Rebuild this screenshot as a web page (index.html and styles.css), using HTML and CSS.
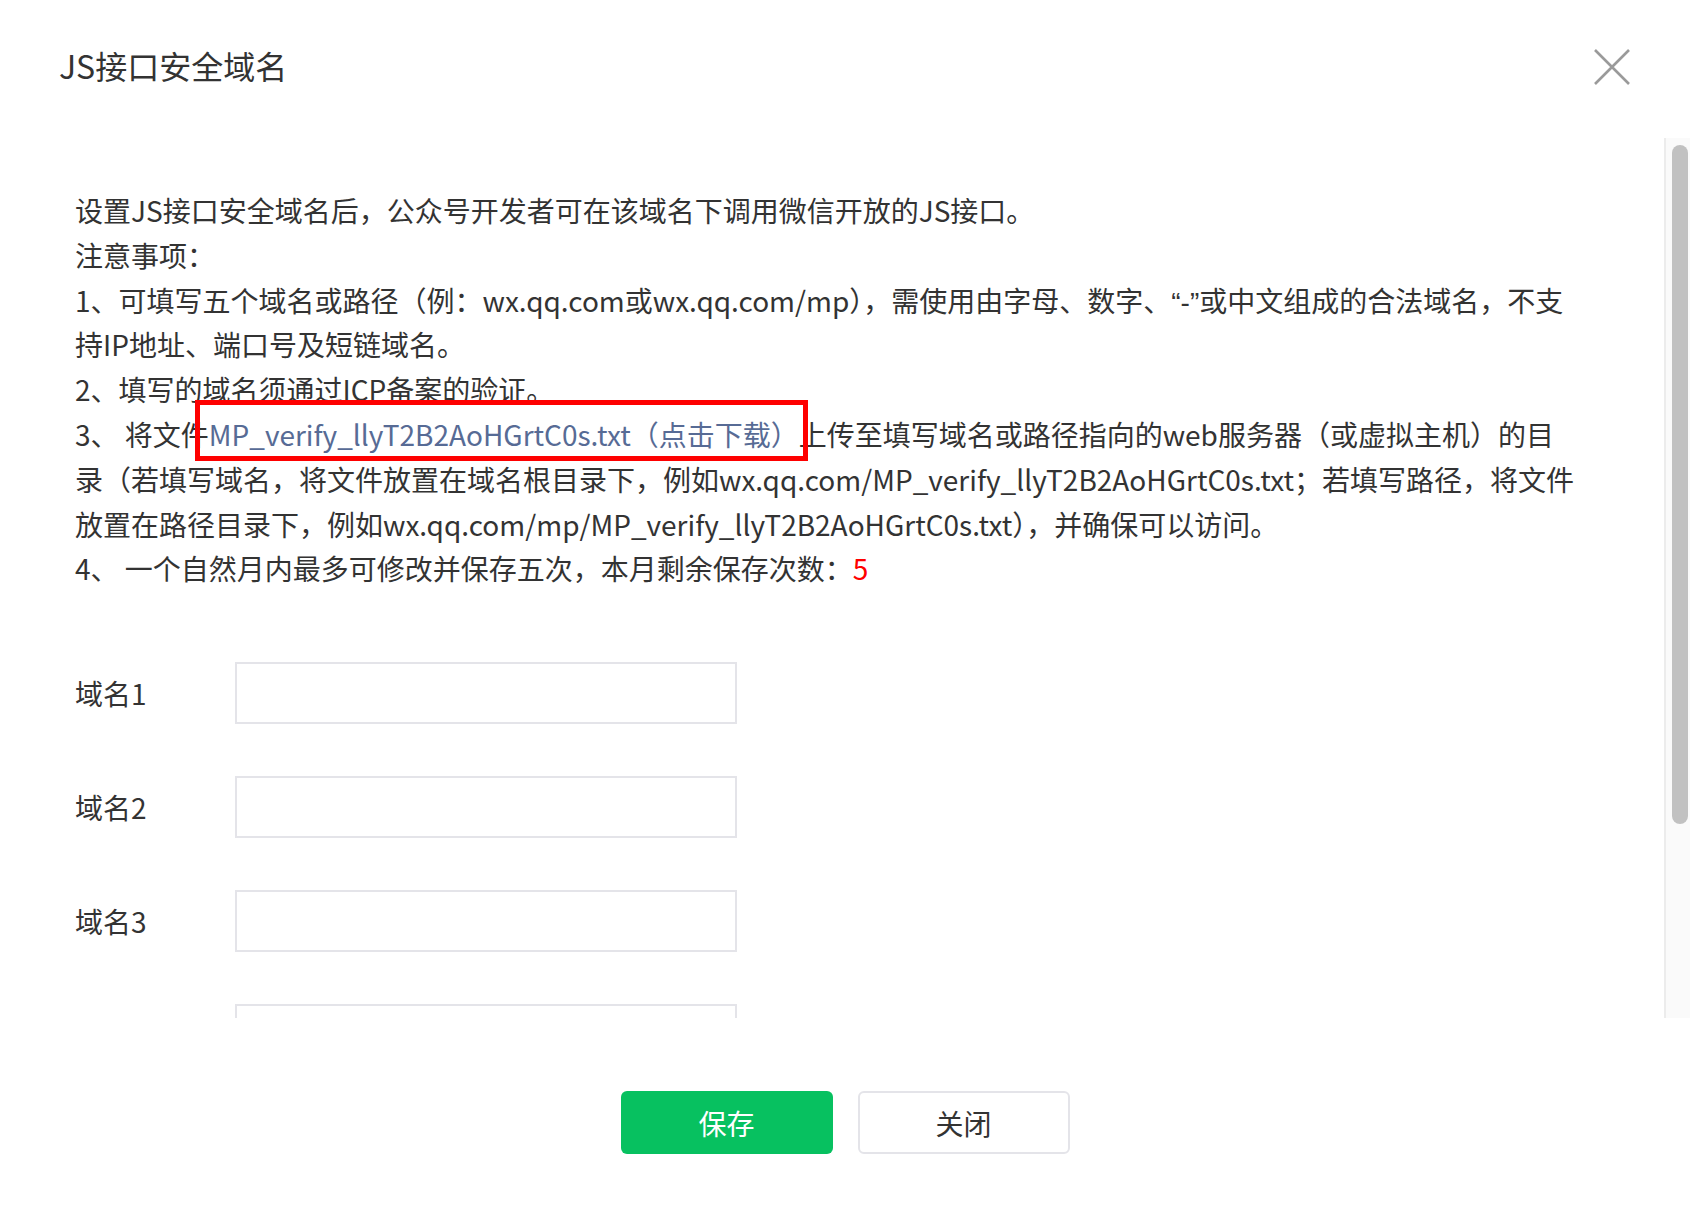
FILE: index.html
```html
<!DOCTYPE html>
<html lang="zh-CN">
<head>
<meta charset="utf-8">
<title>JS接口安全域名</title>
<link rel="stylesheet" href="styles.css">
</head>
<body>
<div class="dialog">
  <header class="hd">
    <h3 class="title">JS接口安全域名</h3>
    <button class="close" type="button" aria-label="关闭">
      <svg width="36" height="36" viewBox="0 0 36 36"><path d="M1 1L35 35M35 1L1 35" stroke="#9a9a9a" stroke-width="2.6" fill="none"/></svg>
    </button>
  </header>
  <div class="bd">
    <div class="scroll">
      <div class="desc">
        <p>设置JS接口安全域名后，公众号开发者可在该域名下调用微信开放的JS接口。</p>
        <p>注意事项：</p>
        <p>1、可填写五个域名或路径（例：wx.qq.com或wx.qq.com/mp），需使用由字母、数字、<span class="q">“-”</span>或中文组成的合法域名，不支<br>持IP地址、端口号及短链域名。</p>
        <p>2、填写的域名须通过ICP备案的验证。</p>
        <p>3、 将文件<a class="dl" href="#">MP_verify_llyT2B2AoHGrtC0s.txt（点击下载）</a>上传至填写域名或路径指向的web服务器（或虚拟主机）的目<br>录（若填写域名，将文件放置在域名根目录下，例如wx.qq.com/MP_verify_llyT2B2AoHGrtC0s.txt；若填写路径，将文件<br>放置在路径目录下，例如wx.qq.com/mp/MP_verify_llyT2B2AoHGrtC0s.txt），并确保可以访问。</p>
        <p>4、 一个自然月内最多可修改并保存五次，本月剩余保存次数：<span class="red">5</span></p>
      </div>
      <form class="domains">
        <label class="row"><span class="lbl">域名1</span><input class="ipt" type="text"></label>
        <label class="row"><span class="lbl">域名2</span><input class="ipt" type="text"></label>
        <label class="row"><span class="lbl">域名3</span><input class="ipt" type="text"></label>
        <label class="row"><span class="lbl">域名4</span><input class="ipt" type="text"></label>
        <label class="row"><span class="lbl">域名5</span><input class="ipt" type="text"></label>
      </form>
    </div>
    <div class="scrollbar"><div class="thumb"></div></div>
  </div>
  <footer class="ft">
    <button class="btn btn-primary" type="button">保存</button>
    <button class="btn btn-default" type="button">关闭</button>
  </footer>
</div>
</body>
</html>
```
FILE: styles.css
```css
* { box-sizing: border-box; }
html, body { margin: 0; padding: 0; background: #fff; }
body {
  font-family: "Noto Sans CJK SC", "Noto Sans", sans-serif;
  color: #333;
  width: 1690px;
  height: 1220px;
  overflow: hidden;
}
.dialog { width: 1690px; }
.hd {
  height: 134px;
  display: flex;
  align-items: center;
  justify-content: space-between;
  padding: 0 60px 0 59px;
}
.title {
  margin: 0 0 4px;
  font-size: 32px;
  font-weight: 400;
  color: #333;
  line-height: 1;
}
.close {
  border: 0;
  background: none;
  padding: 0;
  width: 36px;
  height: 36px;
  display: block;
  cursor: pointer;
}
.close svg { display: block; }
.bd {
  position: relative;
  margin-top: 4px;
  height: 880px;
}
.scroll {
  height: 100%;
  overflow: hidden;
  padding: 50px 100px 100px 75px;
}
.desc {
  font-size: 28px;
  line-height: 44.8px;
  white-space: nowrap;
}
.desc p { margin: 0; }
.q { font-family: "Liberation Sans", sans-serif; line-height: 1; }
.dl {
  position: relative;
  color: #576b95;
  text-decoration: none;
}
.dl::after {
  content: "";
  position: absolute;
  left: -14px;
  right: -9px;
  top: -14px;
  bottom: -7px;
  border: 5px solid #fe0000;
}
.red { color: #f00; }
.domains {
  margin-top: 71px;
  display: flex;
  flex-direction: column;
  gap: 52px;
}
.row {
  display: flex;
  align-items: center;
}
.lbl {
  width: 160px;
  font-size: 28px;
  color: #333;
}
.ipt {
  width: 502px;
  height: 62px;
  border: 2px solid #e4e4e9;
  border-radius: 0;
  background: #fff;
  outline: none;
  font: inherit;
  font-size: 28px;
  padding: 0 16px;
}
.scrollbar {
  position: absolute;
  top: 0;
  right: 0;
  bottom: 0;
  width: 26px;
  border-left: 2px solid #ececec;
  background: #fafafa;
}
.thumb {
  position: absolute;
  top: 7px;
  left: 6px;
  width: 16px;
  height: 679px;
  border-radius: 8px;
  background: #c1c1c1;
}
.ft {
  margin-top: 73px;
  display: flex;
  justify-content: center;
  gap: 25px;
}
.btn {
  width: 212px;
  height: 63px;
  border-radius: 6px;
  font-family: inherit;
  font-size: 28px;
  padding: 0;
  cursor: pointer;
}
.btn-primary {
  border: 0;
  background: #07c160;
  color: #fff;
}
.btn-default {
  border: 2px solid #e4e4e9;
  background: #fff;
  color: #333;
}
```
